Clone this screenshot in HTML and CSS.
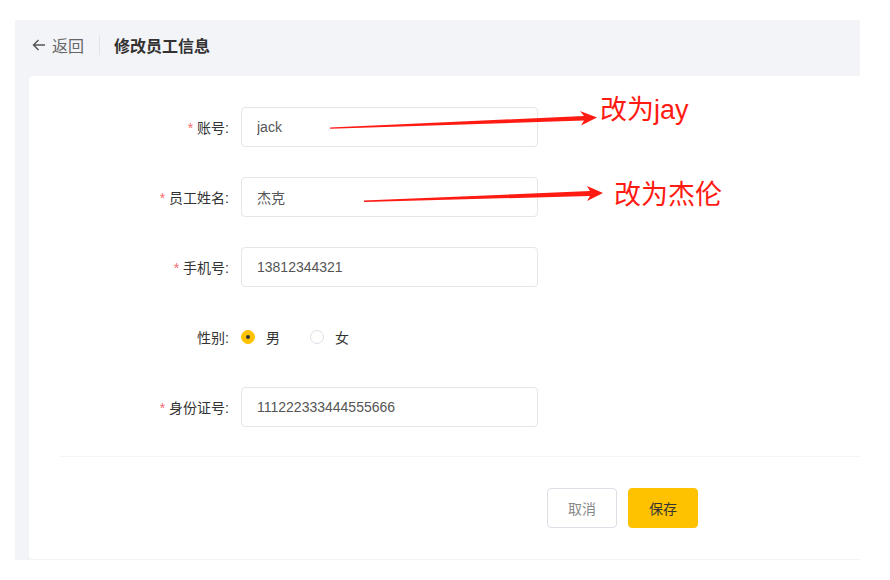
FILE: index.html
```html
<!DOCTYPE html>
<html>
  <head lang="zh">
    <meta charset="UTF-8" />
    <title>修改员工信息</title>
    <link rel="stylesheet" href="styles.css">
  </head>

  <body>
    <div class="page">
      <div class="head">
        <a class="back">
          <svg width="14" height="12" viewBox="0 0 14 12">
            <path d="M13 6H1.5M6.5 1L1.5 6l5 5" fill="none" stroke="#555" stroke-width="1.4" />
          </svg>
          返回
        </a>
        <span class="sep"></span>
        <span class="title">修改员工信息</span>
      </div>

      <div class="card">
        <form class="form">
          <div class="row">
            <label class="lbl"><i>*</i>账号:</label>
            <input class="inp" type="text" value="jack" />
          </div>
          <div class="row">
            <label class="lbl"><i>*</i>员工姓名:</label>
            <input class="inp" type="text" value="杰克" />
          </div>
          <div class="row">
            <label class="lbl"><i>*</i>手机号:</label>
            <input class="inp" type="text" value="13812344321" />
          </div>
          <div class="row">
            <label class="lbl">性别:</label>
            <div class="radios">
              <span class="radio on"><b></b>男</span>
              <span class="radio"><b></b>女</span>
            </div>
          </div>
          <div class="row">
            <label class="lbl"><i>*</i>身份证号:</label>
            <input class="inp" type="text" value="111222333444555666" />
          </div>
        </form>
        <div class="line"></div>
        <div class="btns">
          <button class="btn">取消</button>
          <button class="btn save">保存</button>
        </div>
      </div>
    </div>

    <!-- 标注 -->
    <svg class="marks" width="890" height="580" viewBox="0 0 890 580">
      <polygon fill="#ff1a12" points="330,127.4 584,116 580,111 597,117.5 581,125.5 584,120.5 330,128.8" />
      <polygon fill="#ff1a12" points="364,200.6 590,191 587,186 603,193 587,201 590,196 364,202" />
    </svg>
    <div class="note note1">改为jay</div>
    <div class="note note2">改为杰伦</div>
  </body>
</html>
```

FILE: styles.css
```css
body {
  margin: 0;
  padding: 20px 30px 20px 15px;
  font-family: "Liberation Sans", "Noto Sans CJK SC", sans-serif;
  font-size: 14px;
  color: #333;
  background: #fff;
  position: relative;
}

.page {
  background: #f3f4f7;
  padding: 0 0 1px 14px;
}

.head {
  box-sizing: border-box;
  height: 56px;
  padding: 0 0 6px 3px;
  display: flex;
  align-items: center;
}

.head .back {
  display: flex;
  align-items: center;
  gap: 6px;
  font-size: 16px;
  color: #666;
  cursor: pointer;
}

.head .sep {
  width: 1px;
  height: 20px;
  background: #e3e4e8;
  margin: 0 14px 0 15px;
}

.head .title {
  font-size: 16px;
  font-weight: bold;
  color: #333;
}

.card {
  background: #fff;
  border-radius: 4px 0 0 4px;
  padding: 31px 0 31px 30px;
}

.form .row {
  display: flex;
  align-items: center;
  height: 40px;
  margin-bottom: 30px;
}

.form .row:last-child {
  margin-bottom: 29px;
}

.form .lbl {
  width: 170px;
  margin-right: 12px;
  text-align: right;
  color: #333;
}

.form .lbl i {
  font-style: normal;
  color: #f56c6c;
  margin-right: 4px;
}

.form .inp {
  box-sizing: border-box;
  width: 297px;
  height: 40px;
  border: 1px solid #e4e6eb;
  border-radius: 4px;
  padding: 0 15px;
  font-family: inherit;
  font-size: 14px;
  color: #555;
  outline: none;
}

.radios {
  display: flex;
  align-items: center;
}

.radio {
  display: flex;
  align-items: center;
  margin-right: 30px;
  color: #333;
}

.radio b {
  box-sizing: border-box;
  width: 14px;
  height: 14px;
  border-radius: 50%;
  border: 1px solid #dcdfe6;
  margin-right: 11px;
  display: flex;
  align-items: center;
  justify-content: center;
}

.radio.on b {
  background: #ffc200;
  border-color: #ffc200;
}

.radio.on b::after {
  content: "";
  width: 4px;
  height: 4px;
  border-radius: 50%;
  background: #333;
}

.line {
  height: 1px;
  background: #f5f5f6;
}

.btns {
  display: flex;
  gap: 11px;
  padding: 31px 0 0 488px;
}

.btn {
  width: 70px;
  height: 40px;
  border: 1px solid #dcdfe6;
  border-radius: 4px;
  background: #fff;
  font-family: inherit;
  font-size: 14px;
  color: #888;
  cursor: pointer;
}

.btn.save {
  background: #ffc200;
  border-color: #ffc200;
  color: #333;
}

.marks {
  position: absolute;
  left: 0;
  top: 0;
  pointer-events: none;
}

.note {
  position: absolute;
  font-size: 27px;
  line-height: 30px;
  color: #ff1a12;
  font-family: "Liberation Sans", "Noto Sans CJK SC", sans-serif;
}

.note1 {
  left: 600px;
  top: 95px;
}

.note2 {
  left: 614px;
  top: 180px;
}
```
